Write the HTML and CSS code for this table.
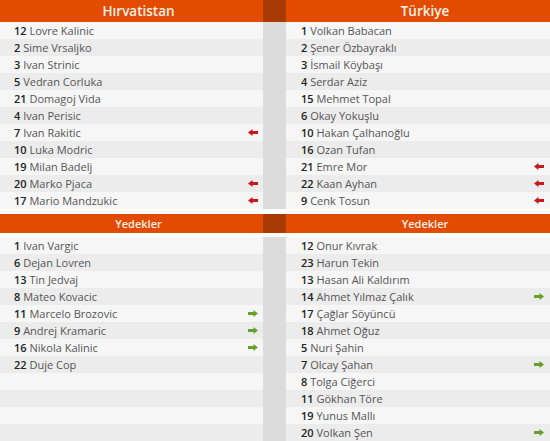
FILE: index.html
```html
<!DOCTYPE html>
<html lang="tr">
<head>
<meta charset="utf-8">
<link rel="stylesheet" href="styles.css">
</head>
<body>
<svg width="0" height="0" class="defs">
  <defs>
    <symbol id="out" viewBox="0 0 10 7"><polygon points="0,3.5 4.5,0 4.5,7"/><rect x="4" y="2" width="6" height="3"/></symbol>
    <symbol id="in" viewBox="0 0 10 7"><polygon points="10,3.5 5.5,0 5.5,7"/><rect x="0" y="2" width="6" height="3"/></symbol>
  </defs>
</svg>
<div class="block">
  <div class="col">
    <div class="head">Hırvatistan</div>
    <div class="row"><span><b>12</b> Lovre Kalinic</span></div>
    <div class="row"><span><b>2</b> Sime Vrsaljko</span></div>
    <div class="row"><span><b>3</b> Ivan Strinic</span></div>
    <div class="row"><span><b>5</b> Vedran Corluka</span></div>
    <div class="row"><span><b>21</b> Domagoj Vida</span></div>
    <div class="row"><span><b>4</b> Ivan Perisic</span></div>
    <div class="row"><span><b>7</b> Ivan Rakitic</span><svg class="ico red"><use href="#out"/></svg></div>
    <div class="row"><span><b>10</b> Luka Modric</span></div>
    <div class="row"><span><b>19</b> Milan Badelj</span></div>
    <div class="row"><span><b>20</b> Marko Pjaca</span><svg class="ico red"><use href="#out"/></svg></div>
    <div class="row"><span><b>17</b> Mario Mandzukic</span><svg class="ico red"><use href="#out"/></svg></div>
  </div>
  <div class="mid"><div class="mid-head"></div><div class="mid-fill"></div></div>
  <div class="col right">
    <div class="head">Türkiye</div>
    <div class="row"><span><b>1</b> Volkan Babacan</span></div>
    <div class="row"><span><b>2</b> Şener Özbayraklı</span></div>
    <div class="row"><span><b>3</b> İsmail Köybaşı</span></div>
    <div class="row"><span><b>4</b> Serdar Aziz</span></div>
    <div class="row"><span><b>15</b> Mehmet Topal</span></div>
    <div class="row"><span><b>6</b> Okay Yokuşlu</span></div>
    <div class="row"><span><b>10</b> Hakan Çalhanoğlu</span></div>
    <div class="row"><span><b>16</b> Ozan Tufan</span></div>
    <div class="row"><span><b>21</b> Emre Mor</span><svg class="ico red"><use href="#out"/></svg></div>
    <div class="row"><span><b>22</b> Kaan Ayhan</span><svg class="ico red"><use href="#out"/></svg></div>
    <div class="row"><span><b>9</b> Cenk Tosun</span><svg class="ico red"><use href="#out"/></svg></div>
  </div>
</div>
<div class="block subs">
  <div class="col">
    <div class="head small">Yedekler</div>
    <div class="list">
      <div class="row"><span><b>1</b> Ivan Vargic</span></div>
      <div class="row"><span><b>6</b> Dejan Lovren</span></div>
      <div class="row"><span><b>13</b> Tin Jedvaj</span></div>
      <div class="row"><span><b>8</b> Mateo Kovacic</span></div>
      <div class="row"><span><b>11</b> Marcelo Brozovic</span><svg class="ico green"><use href="#in"/></svg></div>
      <div class="row"><span><b>9</b> Andrej Kramaric</span><svg class="ico green"><use href="#in"/></svg></div>
      <div class="row"><span><b>16</b> Nikola Kalinic</span><svg class="ico green"><use href="#in"/></svg></div>
      <div class="row"><span><b>22</b> Duje Cop</span></div>
      <div class="row"></div>
      <div class="row"></div>
      <div class="row"></div>
      <div class="row"></div>
    </div>
  </div>
  <div class="mid"><div class="mid-head small"></div><div class="mid-fill gap"></div></div>
  <div class="col right">
    <div class="head small">Yedekler</div>
    <div class="list">
      <div class="row"><span><b>12</b> Onur Kıvrak</span></div>
      <div class="row"><span><b>23</b> Harun Tekin</span></div>
      <div class="row"><span><b>13</b> Hasan Ali Kaldırım</span></div>
      <div class="row"><span><b>14</b> Ahmet Yılmaz Çalık</span><svg class="ico green"><use href="#in"/></svg></div>
      <div class="row"><span><b>17</b> Çağlar Söyüncü</span></div>
      <div class="row"><span><b>18</b> Ahmet Oğuz</span></div>
      <div class="row"><span><b>5</b> Nuri Şahin</span></div>
      <div class="row"><span><b>7</b> Olcay Şahan</span><svg class="ico green"><use href="#in"/></svg></div>
      <div class="row"><span><b>8</b> Tolga Ciğerci</span></div>
      <div class="row"><span><b>11</b> Gökhan Töre</span></div>
      <div class="row"><span><b>19</b> Yunus Mallı</span></div>
      <div class="row"><span><b>20</b> Volkan Şen</span><svg class="ico green"><use href="#in"/></svg></div>
    </div>
  </div>
</div>
</body>
</html>
```
FILE: styles.css
```css
html, body {
  margin: 0;
  padding: 0;
  background: #ffffff;
}
body {
  width: 550px;
  height: 441px;
  overflow: hidden;
  font-family: "Open Sans", "DejaVu Sans", sans-serif;
  font-size: 11px;
  color: #555;
}
.defs {
  position: absolute;
  width: 0;
  height: 0;
}
.block {
  display: flex;
  align-items: stretch;
}
.subs {
  margin-top: 5px;
}
.col {
  width: 263px;
  display: flex;
  flex-direction: column;
}
.col.right {
  width: 264px;
}
.head {
  height: 22px;
  line-height: 22px;
  background: #e24b00;
  color: #fdf1ea;
  font-size: 13.5px;
  font-weight: 600;
  text-align: center;
  padding-left: 14px;
}
.head.small {
  height: 19px;
  line-height: 19px;
  font-size: 11px;
}
.list {
  margin-top: 4px;
}
.mid {
  width: 23px;
  display: flex;
  flex-direction: column;
}
.mid-head {
  height: 22px;
  background: #a83a04;
}
.mid-head.small {
  height: 19px;
}
.mid-fill {
  flex: 1;
  background: #dcdcdc;
}
.mid-fill.gap {
  margin-top: 4px;
}
.row {
  height: 17px;
  line-height: 17px;
  display: flex;
  align-items: center;
  justify-content: space-between;
  padding: 0 5px 0 14px;
  background: #f6f6f6;
}
.right .row {
  padding: 0 6px 0 15px;
}
.row:nth-child(odd) {
  background: #ececec;
}
.list .row:nth-child(odd) {
  background: #f6f6f6;
}
.list .row:nth-child(even) {
  background: #ececec;
}
.row b {
  color: #222;
  font-weight: 600;
}
.ico {
  width: 10px;
  height: 7px;
}
.red {
  fill: #c9181c;
}
.green {
  fill: #66a02a;
}
```
